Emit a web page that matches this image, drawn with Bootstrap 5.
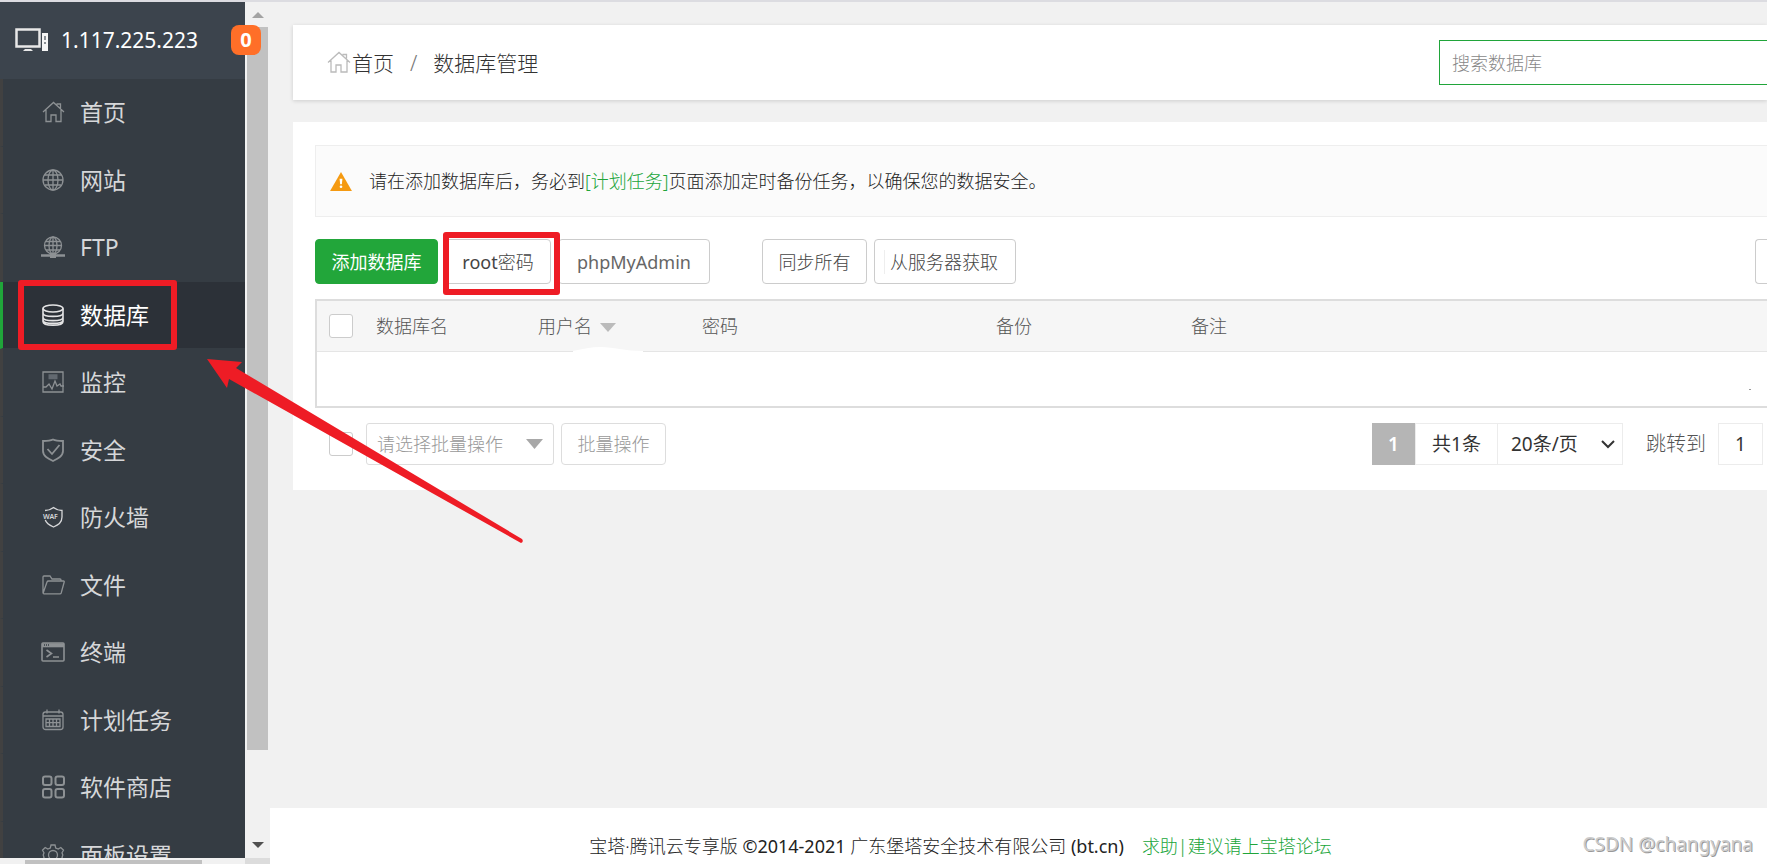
<!DOCTYPE html>
<html lang="zh-CN">
<head>
<meta charset="utf-8">
<meta name="viewport" content="width=device-width, initial-scale=1">
<title>数据库管理</title>
<link href="https://cdn.jsdelivr.net/npm/bootstrap@5.3.0/dist/css/bootstrap.min.css" rel="stylesheet">
<style>
  body { font-family: "Noto Sans", "Noto Sans CJK SC", sans-serif; font-size: 18px; line-height: 24px; color: #333; background: #f1f1f1; }
  a { color: #20a53a; }
  .topline { height: 2px; background: #dcdce1; }
  .shell { height: calc(100vh - 2px); }

  .side { width: 270px; }
  .side-view { width: 245px; background: #353c43; }
  .side-head { height: 77px; padding: 0 13px 2px 15px; background: #3c444d; color: #fff; font-size: 21px; }
  .side-head svg { width: 34px; height: 26px; }
  .count { left: 231px; top: 23px; width: 30px; height: 30px; border-radius: 8px; background: #ff6f28; color: #fff; font-size: 20px; font-weight: 700; z-index: 2; }
  .menu { height: 810px; }
  .menu a { border-left: 3px solid #414141; border-bottom: 1px solid #353c43; padding-left: 38px; gap: 15px; font-size: 23px; line-height: 30px; color: #d6d7d9; }
  .menu a.active { background: #2c3138; border-left-color: #20a53a; color: #fff; }
  .menu svg { width: 24px; height: 24px; color: #8d9194; fill: none; stroke: currentColor; stroke-width: 1.3; }
  .menu a.active svg { color: #e4e4e5; }

  .vbar { width: 25px; background: #f1f1f1; }
  .vbar-thumb { height: 723px; margin: 0 2px; background: #c1c1c1; }
  .vbar svg { height: 25px; width: 25px; }
  .hbar { width: 245px; height: 6px; background: #f1f1f1; padding: 2px 0 0 25px; }
  .hbar-thumb { height: 4px; width: 177px; background: #c1c1c1; }
  .corner { width: 25px; background: #dcdcdc; }

  .content { font-weight: 300; }
  .page-body { padding: 23px 0 0 23px; }
  .crumbs { height: 75px; padding-left: 34px; background: #fff; box-shadow: 0 1px 4px rgba(0,0,0,.15); font-size: 21px; line-height: 28px; }
  .crumbs a, .crumbs .here { color: #333; }
  .crumbs a { padding-left: 1px; }
  .crumbs .slash { color: #777; padding: 0 16px; }
  .crumbs svg { width: 24px; height: 24px; fill: none; stroke: #bbb; stroke-width: 1.3; }
  .search { width: 328px; height: 45px; padding: 0 12px; border: 1px solid #20a53a; border-right: 0; font-size: 18px; font-weight: 300; color: #333; outline: 0; }
  .search::placeholder { color: #888; opacity: 1; }
  .panel { margin-top: 22px; padding: 23px 0 25px 22px; background: #fff; }
  .notice { height: 72px; padding-left: 14px; gap: 17px; border: 1px solid #eee; border-right: 0; background: #fbfbfb; color: #222; }
  .notice svg { width: 22px; height: 19px; }

  .tools { margin-top: 22px; gap: 7px; }
  .tool { height: 45px; padding: 0; border: 1px solid #ccc; border-radius: 4px; background: #fff; color: #444; font-size: 18px; font-weight: 300; line-height: 24px; white-space: nowrap; }
  .tool-main { width: 123px; background: #22a63a; border-color: #22a63a; color: #fff; font-weight: 400; }
  .tool-root { width: 106px; }
  .tool-admin { width: 152px; margin-right: 45px; color: #666; font-weight: 400; }
  .tool-sync { width: 105px; }
  .tool-fetch { width: 142px; padding-right: 8px; }
  .tool-fetch span { border-left: 1px solid #eee; padding-left: 5px; }
  .tool-edge { width: 12px; border-right: 0; border-radius: 4px 0 0 4px; }

  .list-frame { margin-top: 15px; border: 2px solid #ddd; border-right: 0; }
  .db-table { table-layout: fixed; color: #666; }
  .db-table th { height: 50px; padding: 0; border-bottom: 1px solid #e5e5e5; background: #f6f6f6; color: #555; font-weight: 300; vertical-align: middle; }
  .db-table td { height: 55px; padding: 0 16px 15px 0; border: 0; vertical-align: bottom; line-height: 8px; }
  .tick { appearance: none; display: block; width: 24px; height: 24px; margin: 0; border: 1px solid #ccc; border-radius: 3px; background: #fff; }
  .sort svg { width: 16px; height: 9px; margin-left: 8px; }

  .under { margin-top: 15px; padding-left: 14px; }
  .bulk { width: 188px; height: 42px; margin-left: 13px; padding: 0 10px; appearance: none; border: 1px solid #ddd; border-radius: 3px; font-size: 18px; font-weight: 300; color: #999; opacity: 1;
    background: #fff url("data:image/svg+xml,%3Csvg xmlns='http://www.w3.org/2000/svg' width='17' height='10'%3E%3Cpath d='M0 0h17L8.500 10z' fill='%23a8a8a8'/%3E%3C/svg%3E") no-repeat right 10px center; }
  .bulk-go { width: 105px; height: 42px; margin-left: 7px; padding: 0; border: 1px solid #ddd; border-radius: 4px; background: #fff; color: #999; font-weight: 300; }
  .pager { margin-right: 4px; font-size: 19px; }
  .pager > * { height: 42px; }
  .pg-now { width: 43px; background: #b5b5b5; color: #fff; font-weight: 600; }
  .pg-total { width: 83px; border: 1px solid #ececec; font-weight: 400; }
  .pg-size { width: 125px; padding: 0 13px; appearance: none; border: 1px solid #ececec; border-left: 0; color: #333; font-weight: 400;
    background: #fff url("data:image/svg+xml,%3Csvg xmlns='http://www.w3.org/2000/svg' width='14' height='9'%3E%3Cpath d='M1 1l6 6 6-6' fill='none' stroke='%23333' stroke-width='2'/%3E%3C/svg%3E") no-repeat right 7px center; }
  .pg-label { margin: 0 12px 0 23px; color: #555; font-size: 20px; }
  .pg-num { width: 45px; border: 1px solid #ececec; color: #333; text-align: center; padding: 0; }

  .foot { height: 56px; padding: 26px 116px 0 0; background: #fff; gap: 18px; color: #222; }
  .watermark { right: 14px; bottom: 8px; font-size: 19px; color: #ccc; text-shadow: 1px 1px 0 #999; }
  .marks { left: 0; top: 0; z-index: 5; pointer-events: none; }
</style>
</head>
<body class="overflow-hidden position-relative">
<div class="topline"></div>
<div class="shell d-flex">

  <aside class="side d-flex flex-column flex-shrink-0 position-relative">
    <span class="count position-absolute d-flex align-items-center justify-content-center">0</span>
    <div class="d-flex flex-fill overflow-hidden">
      <div class="side-view overflow-hidden">
        <div class="side-head d-flex align-items-center gap-2">
          <svg viewBox="0 0 34 26"><rect x="1.500" y="2.500" width="23" height="17" fill="none" stroke="#e8e8e8" stroke-width="2.500"/><path d="M8 24l2-2h6l2 2z" fill="#e8e8e8"/><path d="M27 6h6v18h-6z" fill="#f5f5f5"/><path d="M29 9h2v4h-2zM29 15h2v2h-2z" fill="#8a8f94"/></svg>
          <span class="ms-1">1.117.225.223</span>
        </div>
        <nav class="menu d-flex flex-column">
          <a class="flex-fill d-flex align-items-center text-decoration-none" href="#"><svg viewBox="0 0 24 24"><path d="M2 12L12.500 2.500 23 12M5 10v11.500h5V15h5v6.500h5V10M15.500 4h4v5"/></svg>首页</a>
          <a class="flex-fill d-flex align-items-center text-decoration-none" href="#"><svg viewBox="0 0 24 24"><circle cx="12" cy="12" r="10"/><ellipse cx="12" cy="12" rx="5" ry="10"/><path d="M12 2v20M2 12h20M4 7h16M4 17h16"/></svg>网站</a>
          <a class="flex-fill d-flex align-items-center text-decoration-none" href="#"><svg viewBox="0 0 24 24"><circle cx="12" cy="10.500" r="8.500"/><ellipse cx="12" cy="10.500" rx="4" ry="8.500"/><path d="M12 2v17M3.500 10.500h17M5 6.500h14M5 15h14"/><path d="M0 20.500h24" stroke-width="2.500"/><path d="M9 20.500h6" stroke-width="5"/></svg>FTP</a>
          <a class="active flex-fill d-flex align-items-center text-decoration-none" href="#" aria-current="page"><svg viewBox="0 0 24 24"><g stroke-width="1.600"><ellipse cx="12" cy="5.500" rx="10" ry="3.500"/><path d="M2 5.500v13c0 5 20 5 20 0v-13M2 10c0 4.500 20 4.500 20 0M2 14.200c0 4.500 20 4.500 20 0M2 17c0 4.500 20 4.500 20 0"/></g></svg>数据库</a>
          <a class="flex-fill d-flex align-items-center text-decoration-none" href="#"><svg viewBox="0 0 24 24"><path d="M2 2h20v20H2zM2 17h3l3-3 3 5 3-8 2 5 3-2 1 2h3"/><path d="M7.500 5.500h9M7.500 8h9" stroke="#626970" stroke-width="2.500"/></svg>监控</a>
          <a class="flex-fill d-flex align-items-center text-decoration-none" href="#"><svg viewBox="0 0 24 24"><g stroke-width="1.800"><path d="M12 1.500C9 3 5 3 2 3v10c0 5 5 7.500 10 10 5-2.500 10-5 10-10V3c-3 0-7 0-10-1.500z"/><path d="M6.500 11l4.500 5 7.500-9"/></g></svg>安全</a>
          <a class="flex-fill d-flex align-items-center text-decoration-none" href="#"><svg viewBox="0 0 24 24"><g stroke="#d6d7d9"><path d="M4 5.500c3 0 6-1 8.500-3C15 4.500 17.500 5.500 21 5.500V12c0 6-4 8-8.500 10C9 20.500 5.500 19 4.300 15"/><text x="2" y="13.500" font-size="7" font-weight="600" fill="#d6d7d9" stroke="none">WAF</text></g></svg>防火墙</a>
          <a class="flex-fill d-flex align-items-center text-decoration-none" href="#"><svg viewBox="0 0 24 24"><path d="M2 20V4q0-1 1-1h6l2 3h8q1 0 1 1v1M2 20.500L6 9q.4-1 1.500-1h15q1 0 .7 1l-3 11q-.3.800-1.200.800H3q-1 0-1-1"/></svg>文件</a>
          <a class="flex-fill d-flex align-items-center text-decoration-none" href="#"><svg viewBox="0 0 24 24"><g stroke-width="1.600"><rect x="1" y="3" width="22" height="18" rx="1"/><path d="M1 5.300h22" stroke-width="4"/><path d="M3 5h6" stroke="#353c43" stroke-dasharray="1 1"/><path d="M5.500 10l5 3.500-5 3.500M12 17h6"/></g></svg>终端</a>
          <a class="flex-fill d-flex align-items-center text-decoration-none" href="#"><svg viewBox="0 0 24 24"><rect x="2" y="4" width="20" height="17.500" rx="2.500"/><path d="M6 1.500v4M18 1.500v4M2 8h20M5 11h14v7.500H5zM5 14.700h14M8.500 11v7.500M12 11v7.500M15.500 11v7.500"/></svg>计划任务</a>
          <a class="flex-fill d-flex align-items-center text-decoration-none" href="#"><svg viewBox="0 0 24 24"><g stroke-width="2"><rect x="2" y="1.500" width="8.500" height="8.500" rx="2"/><rect x="14.500" y="1.500" width="8.500" height="8.500" rx="2"/><rect x="2" y="14" width="8.500" height="8.500" rx="2"/><rect x="14.500" y="14" width="8.500" height="8.500" rx="2"/></g></svg>软件商店</a>
          <a class="flex-fill d-flex align-items-center text-decoration-none" href="#"><svg viewBox="0 0 24 24"><circle cx="12" cy="12" r="4.500"/><path d="M10 2h4l.7 3 2.500 1 2.600-1.500 2.700 2.700L21 9.800l.8 2.200-.8 2.500 1.500 2.500-2.700 2.700-2.600-1.500-2.500 1L14 22h-4l-.7-2.800-2.500-1-2.600 1.500L1.500 17 3 14.500 2.200 12 3 9.800 1.500 7.200l2.700-2.700L6.800 6l2.500-1z"/></svg>面板设置</a>
        </nav>
      </div>
      <div class="vbar d-flex flex-column">
        <svg viewBox="0 0 25 25"><path d="M7 16l6-6 6 6z" fill="#a3a3a3"/></svg>
        <div class="vbar-thumb"></div>
        <svg class="mt-auto" viewBox="0 0 25 25"><path d="M7 9l6 6 6-6z" fill="#505050"/></svg>
      </div>
    </div>
    <div class="d-flex">
      <div class="hbar flex-shrink-0"><div class="hbar-thumb"></div></div>
      <div class="corner"></div>
    </div>
  </aside>

  <div class="content flex-fill d-flex flex-column overflow-hidden">
    <main class="page-body">
      <header class="crumbs d-flex align-items-center">
        <svg viewBox="0 0 24 24"><path d="M1 11.500L12 1.500 23 11.500M4 9.500V21h5v-7h5v7h6V9.500M15.500 3.500h4v4"/></svg>
        <a href="#" class="text-decoration-none">首页</a><span class="slash">/</span><span class="here">数据库管理</span>
        <input class="search ms-auto" type="text" placeholder="搜索数据库" aria-label="搜索数据库">
      </header>

      <section class="panel">
        <div class="notice d-flex align-items-center">
          <svg viewBox="0 0 23 20"><path d="M11.500 0L23 20H0z" fill="#f59a11"/><path d="M10 7h3l-.6 6h-1.800z" fill="#fff"/><circle cx="11.500" cy="15.500" r="1.400" fill="#fff"/></svg>
          <span>请在添加数据库后，务必到<a href="#" class="text-decoration-none">[计划任务]</a>页面添加定时备份任务，以确保您的数据安全。</span>
        </div>

        <div class="tools d-flex">
          <button class="tool tool-main" type="button">添加数据库</button>
          <button class="tool tool-root" type="button"><span class="fw-normal">root</span>密码</button>
          <button class="tool tool-admin" type="button">phpMyAdmin</button>
          <button class="tool tool-sync" type="button">同步所有</button>
          <button class="tool tool-fetch" type="button"><span>从服务器获取</span></button>
          <button class="tool tool-edge ms-auto" type="button" aria-label="更多"></button>
        </div>

        <div class="list-frame">
          <table class="db-table table mb-0">
            <colgroup><col style="width:59px"><col style="width:162px"><col style="width:164px"><col style="width:294px"><col style="width:195px"><col></colgroup>
            <thead><tr>
              <th class="ps-2"><input class="tick ms-1" type="checkbox" aria-label="全选"></th>
              <th>数据库名</th>
              <th class="sort">用户名<svg viewBox="0 0 16 9"><path d="M0 0h16L8 9z" fill="#bbb"/></svg></th>
              <th>密码</th><th>备份</th><th>备注</th>
            </tr></thead>
            <tbody><tr><td colspan="6" class="text-end"><svg width="2" height="1" viewBox="0 0 2 1"><path d="M0 0h2v1H0z" fill="#999"/></svg></td></tr></tbody>
          </table>
        </div>

        <div class="under d-flex align-items-center">
          <input class="tick" type="checkbox" aria-label="选择全部数据库">
          <select class="bulk" aria-label="批量操作类型"><option>请选择批量操作</option></select>
          <button class="bulk-go" type="button">批量操作</button>
          <div class="pager ms-auto d-flex align-items-center">
            <span class="pg-now d-flex align-items-center justify-content-center">1</span>
            <span class="pg-total d-flex align-items-center justify-content-center">共1条</span>
            <select class="pg-size" aria-label="每页条数"><option>20条/页</option></select>
            <label class="pg-label d-flex align-items-center" for="jump">跳转到</label>
            <input class="pg-num" id="jump" type="text" value="1">
          </div>
        </div>
      </section>
    </main>
    <footer class="foot mt-auto d-flex justify-content-center">
      <span>宝塔·腾讯云专享版 <span class="fw-normal">©2014-2021</span> 广东堡塔安全技术有限公司 <span class="fw-normal">(bt.cn)</span></span>
      <a href="#" class="text-decoration-none">求助|建议请上宝塔论坛</a>
    </footer>
  </div>
</div>

<div class="watermark position-absolute">CSDN @changyana</div>

<svg class="marks position-absolute" width="720" height="600" viewBox="0 0 720 600" aria-hidden="true">
  <path d="M573 353v-2c10-2 18-4 28-4 12 0 24 4 42 4v2z" fill="#fff"/>
  <g fill="none" stroke="#ee1c25" stroke-width="6" stroke-linejoin="round">
    <rect x="21" y="283" width="153" height="64"/>
    <rect x="446" y="235" width="111" height="57"/>
  </g>
  <path d="M207 359l35 3-6 6L522 539q2 3-1 4L229 379l-2 9z" fill="#ee1c25"/>
</svg>
<script src="https://cdn.jsdelivr.net/npm/bootstrap@5.3.0/dist/js/bootstrap.bundle.min.js"></script>
</body>
</html>
